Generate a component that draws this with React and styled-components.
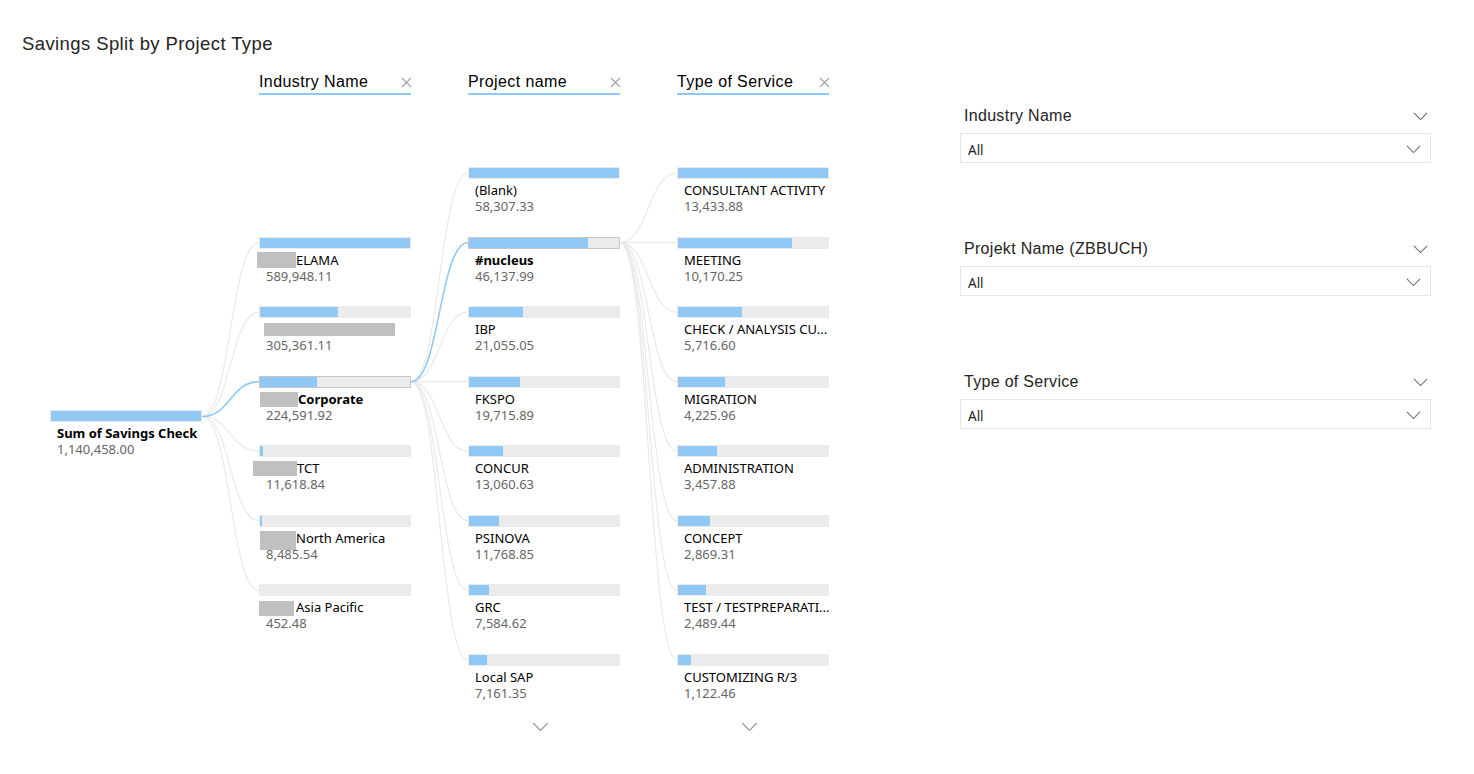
import React from "react";
import styled, { createGlobalStyle } from "styled-components";

const GlobalStyle = createGlobalStyle`
  body {
    margin: 0;
    background: #ffffff;
    font-family: "Noto Sans", "Open Sans", sans-serif;
  }
`;

const ROW = 69.57;
const COL_W = 152;
const COL_GAP = 57;

const Page = styled.div`
  width: 1474px;
  height: 774px;
  display: grid;
  grid-template-columns: 960px 471px;
  overflow: hidden;
`;

const LeftPanel = styled.div`
  padding: 33px 0 0 22px;
`;

const Title = styled.div`
  font-family: "Liberation Sans", sans-serif;
  font-size: 18.5px;
  letter-spacing: 0.4px;
  line-height: 22px;
  color: #252423;
`;

const ColumnGrid = styled.div`
  display: grid;
  grid-template-columns: repeat(4, ${COL_W}px);
  column-gap: ${COL_GAP}px;
  margin-left: 28px;
`;

const HeaderRow = styled(ColumnGrid)`
  margin-top: 15px;
`;

const LevelHeader = styled.div`
  display: flex;
  align-items: center;
  justify-content: space-between;
  height: 25px;
  padding-top: 1px;
  box-sizing: border-box;
  border-bottom: 2px solid #8fc8f5;
  font-family: "Liberation Sans", sans-serif;
  font-size: 16px;
  letter-spacing: 0.4px;
  color: #000;
`;

const Tree = styled.div`
  position: relative;
  margin: 72px 0 0 28px;
  height: ${8 * ROW}px;
  display: flex;
  align-items: center;
  gap: ${COL_GAP}px;
`;

const Connectors = styled.svg`
  position: absolute;
  left: 0;
  top: 0;
  overflow: visible;
  pointer-events: none;
`;

const Column = styled.div`
  position: relative;
  width: ${COL_W}px;
  display: flex;
  flex-direction: column;
`;

const Node = styled.div`
  height: ${ROW}px;
  display: flex;
  flex-direction: column;
`;

const Bar = styled.div`
  height: 12px;
  box-sizing: border-box;
  background: #ebebeb;
  border: 1px solid ${(p) => (p.$selected ? "#c6c6c6" : "transparent")};
  display: flex;
`;

const Fill = styled.div`
  height: 100%;
  background: #8fc8f5;
`;

const Label = styled.div`
  margin-top: 3px;
  padding-left: 7px;
  height: 16px;
  font-size: 13px;
  line-height: 16px;
  color: #000;
  font-weight: ${(p) => (p.$bold ? 700 : 400)};
  white-space: nowrap;
  display: flex;
  align-items: center;
`;

const Value = styled.div`
  padding-left: 7px;
  font-size: 13px;
  line-height: 16px;
  color: #666666;
`;

const Redact = styled.span`
  display: inline-block;
  flex: none;
  width: ${(p) => p.$w}px;
  height: ${(p) => p.$h}px;
  margin-left: ${(p) => p.$ml}px;
  margin-right: ${(p) => p.$mr || 0}px;
  margin-top: ${(p) => p.$mt || 0}px;
  background: #c0c0c0;
`;

const FooterRow = styled(ColumnGrid)`
  margin-top: -2px;
`;

const More = styled.div`
  grid-column: ${(p) => p.$col};
  display: flex;
  justify-content: center;
  padding-right: 8px;
`;

const RightPanel = styled.div`
  padding-top: 104px;
  display: flex;
  flex-direction: column;
  gap: 74px;
`;

const Slicer = styled.div`
  display: flex;
  flex-direction: column;
  gap: 5px;
`;

const SlicerHead = styled.div`
  height: 24px;
  display: flex;
  align-items: center;
  justify-content: space-between;
  padding: 0 3px 0 4px;
  font-family: "Liberation Sans", sans-serif;
  font-size: 16px;
  letter-spacing: 0.3px;
  color: #252423;
`;

const Dropdown = styled.div`
  height: 30px;
  box-sizing: border-box;
  border: 1px solid #e6e6e6;
  display: flex;
  align-items: center;
  justify-content: space-between;
  padding: 3px 9px 0 7px;
  font-size: 13.5px;
  color: #252423;
`;

const Chevron = ({ w = 16, color = "#6f6f6f" }) => (
  <svg width={w} height={w / 2 + 1} viewBox="0 0 16 9">
    <polyline points="1,1 8,8 15,1" fill="none" stroke={color} strokeWidth="1.2" />
  </svg>
);

const CloseIcon = () => (
  <svg width="11" height="11" viewBox="0 0 11 11" style={{ marginRight: "-1px" }}>
    <path d="M1,1 L10,10 M10,1 L1,10" stroke="#a6a6a6" strokeWidth="1.3" fill="none" />
  </svg>
);

const root = { label: "Sum of Savings Check", value: "1,140,458.00", v: 1, bold: true };

const level1 = [
  { redact: { w: 39, h: 16, ml: -9 }, label: "ELAMA", value: "589,948.11", v: 589948.11 },
  { redact: { w: 131, h: 13, ml: -2 }, label: "", value: "305,361.11", v: 305361.11 },
  { redact: { w: 38, h: 15, ml: -6, mt: 1 }, label: "Corporate", value: "224,591.92", v: 224591.92, bold: true, selected: true },
  { redact: { w: 44, h: 15, ml: -13 }, label: "TCT", value: "11,618.84", v: 11618.84 },
  { redact: { w: 36, h: 19, ml: -6, mt: 6 }, label: "North America", value: "8,485.54", v: 8485.54 },
  { redact: { w: 35, h: 15, ml: -7, mr: 2, mt: 2 }, label: "Asia Pacific", value: "452.48", v: 0 },
];

const level2 = [
  { label: "(Blank)", value: "58,307.33", v: 58307.33 },
  { label: "#nucleus", value: "46,137.99", v: 46137.99, bold: true, selected: true },
  { label: "IBP", value: "21,055.05", v: 21055.05 },
  { label: "FKSPO", value: "19,715.89", v: 19715.89 },
  { label: "CONCUR", value: "13,060.63", v: 13060.63 },
  { label: "PSINOVA", value: "11,768.85", v: 11768.85 },
  { label: "GRC", value: "7,584.62", v: 7584.62 },
  { label: "Local SAP", value: "7,161.35", v: 7161.35 },
];

const level3 = [
  { label: "CONSULTANT ACTIVITY", value: "13,433.88", v: 13433.88 },
  { label: "MEETING", value: "10,170.25", v: 10170.25 },
  { label: "CHECK / ANALYSIS CU...", value: "5,716.60", v: 5716.6 },
  { label: "MIGRATION", value: "4,225.96", v: 4225.96 },
  { label: "ADMINISTRATION", value: "3,457.88", v: 3457.88 },
  { label: "CONCEPT", value: "2,869.31", v: 2869.31 },
  { label: "TEST / TESTPREPARATI...", value: "2,489.44", v: 2489.44 },
  { label: "CUSTOMIZING R/3", value: "1,122.46", v: 1122.46 },
];

const colX = (c) => c * (COL_W + COL_GAP);

const curve = (x1, y1, x2, y2) => {
  const mx = (x1 + x2) / 2;
  return `M${x1},${y1} C${mx},${y1} ${mx},${y2} ${x2},${y2}`;
};

function TreeNode({ item, max }) {
  const pct = max ? (item.v / max) * 100 : 100;
  return (
    <Node>
      <Bar $selected={item.selected}>
        <Fill style={{ width: `${pct}%` }} />
      </Bar>
      <Label $bold={item.bold}>
        {item.redact && (
          <Redact $w={item.redact.w} $h={item.redact.h} $ml={item.redact.ml} $mr={item.redact.mr} $mt={item.redact.mt} />
        )}
        {item.label}
      </Label>
      <Value>{item.value}</Value>
    </Node>
  );
}

function Level({ items }) {
  const max = Math.max(...items.map((i) => i.v));
  return (
    <Column>
      {items.map((item, i) => (
        <TreeNode key={i} item={item} max={max} />
      ))}
    </Column>
  );
}

function Links() {
  const paths = [];
  const rootY = 3.5 * ROW + 6;
  level1.forEach((_, i) => {
    paths.push({ d: curve(colX(0) + COL_W, rootY, colX(1), (i + 1) * ROW + 6), on: i === 2 });
  });
  const corpY = 3 * ROW + 6;
  level2.forEach((_, i) => {
    paths.push({ d: curve(colX(1) + COL_W, corpY, colX(2), i * ROW + 6), on: i === 1 });
  });
  const nucY = ROW + 6;
  level3.forEach((_, i) => {
    paths.push({ d: curve(colX(2) + COL_W, nucY, colX(3), i * ROW + 6), on: false });
  });
  const sorted = [...paths.filter((p) => !p.on), ...paths.filter((p) => p.on)];
  return (
    <Connectors width={colX(4)} height={8 * ROW}>
      {sorted.map((p, i) => (
        <path key={i} d={p.d} fill="none" stroke={p.on ? "#8fc8f5" : "#e9e9e9"} strokeWidth={p.on ? 1.6 : 1.2} />
      ))}
    </Connectors>
  );
}

function SlicerBox({ title }) {
  return (
    <Slicer>
      <SlicerHead>
        {title}
        <Chevron w={15} />
      </SlicerHead>
      <Dropdown>
        All
        <Chevron w={15} />
      </Dropdown>
    </Slicer>
  );
}

export default function App() {
  return (
    <>
      <GlobalStyle />
      <Page>
        <LeftPanel>
          <Title>Savings Split by Project Type</Title>
          <HeaderRow>
            <span />
            <LevelHeader>Industry Name<CloseIcon /></LevelHeader>
            <LevelHeader>Project name<CloseIcon /></LevelHeader>
            <LevelHeader>Type of Service<CloseIcon /></LevelHeader>
          </HeaderRow>
          <Tree>
            <Links />
            <Level items={[root]} />
            <Level items={level1} />
            <Level items={level2} />
            <Level items={level3} />
          </Tree>
          <FooterRow>
            <More $col={3}><Chevron w={17} color="#9a9a9a" /></More>
            <More $col={4}><Chevron w={17} color="#9a9a9a" /></More>
          </FooterRow>
        </LeftPanel>
        <RightPanel>
          <SlicerBox title="Industry Name" />
          <SlicerBox title="Projekt Name (ZBBUCH)" />
          <SlicerBox title="Type of Service" />
        </RightPanel>
      </Page>
    </>
  );
}
